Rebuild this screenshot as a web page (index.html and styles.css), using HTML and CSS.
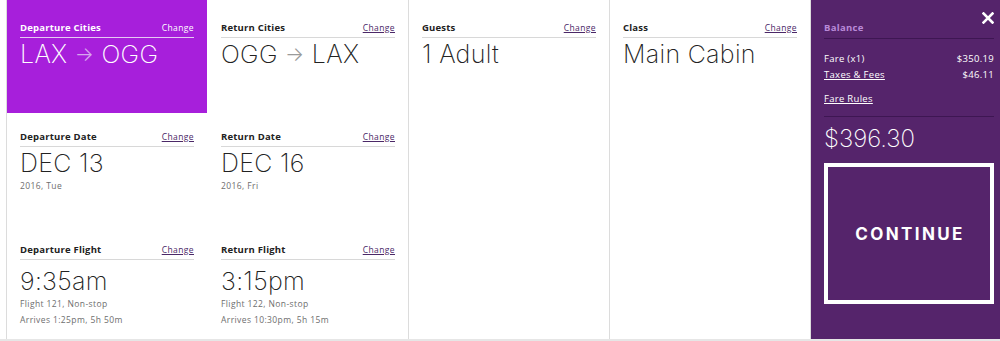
FILE: index.html
```html
<!DOCTYPE html>
<html lang="en">
<head>
    <meta charset="UTF-8">
    <meta name="viewport" content="width=device-width, initial-scale=1.0">
    <title>Trip Summary</title>
    <link rel="stylesheet" href="styles.css">
</head>
<body>
    <div class="page">
        <div class="columns">
            <div class="column">
                <section class="cell cell-active">
                    <div class="cell-head">
                        <span class="label">Departure Cities</span>
                        <a class="change" href="#">Change</a>
                    </div>
                    <div class="value">LAX <span class="arrow">&rarr;</span> OGG</div>
                </section>
                <section class="cell">
                    <div class="cell-head">
                        <span class="label">Departure Date</span>
                        <a class="change" href="#">Change</a>
                    </div>
                    <div class="value">DEC 13</div>
                    <div class="note">2016, Tue</div>
                </section>
                <section class="cell cell-flight">
                    <div class="cell-head">
                        <span class="label">Departure Flight</span>
                        <a class="change" href="#">Change</a>
                    </div>
                    <div class="value">9:35am</div>
                    <div class="note">Flight 121, Non-stop</div>
                    <div class="note">Arrives 1:25pm, 5h 50m</div>
                </section>
            </div>

            <div class="column">
                <section class="cell cell-first">
                    <div class="cell-head">
                        <span class="label">Return Cities</span>
                        <a class="change" href="#">Change</a>
                    </div>
                    <div class="value">OGG <span class="arrow">&rarr;</span> LAX</div>
                </section>
                <section class="cell">
                    <div class="cell-head">
                        <span class="label">Return Date</span>
                        <a class="change" href="#">Change</a>
                    </div>
                    <div class="value">DEC 16</div>
                    <div class="note">2016, Fri</div>
                </section>
                <section class="cell cell-flight">
                    <div class="cell-head">
                        <span class="label">Return Flight</span>
                        <a class="change" href="#">Change</a>
                    </div>
                    <div class="value">3:15pm</div>
                    <div class="note">Flight 122, Non-stop</div>
                    <div class="note">Arrives 10:30pm, 5h 15m</div>
                </section>
            </div>

            <div class="column">
                <section class="cell cell-first">
                    <div class="cell-head">
                        <span class="label">Guests</span>
                        <a class="change" href="#">Change</a>
                    </div>
                    <div class="value">1 Adult</div>
                </section>
            </div>

            <div class="column">
                <section class="cell cell-first">
                    <div class="cell-head">
                        <span class="label">Class</span>
                        <a class="change" href="#">Change</a>
                    </div>
                    <div class="value">Main Cabin</div>
                </section>
            </div>
        </div>

        <aside class="balance">
            <button class="close" aria-label="Close">
                <svg width="12" height="12" viewBox="0 0 12 12">
                    <path d="M1.5 1.5 L10.5 10.5 M10.5 1.5 L1.5 10.5" stroke="#fff" stroke-width="2.6" stroke-linecap="square"/>
                </svg>
            </button>
            <div class="balance-head">Balance</div>
            <div class="balance-row">
                <span>Fare (x1)</span>
                <span>$350.19</span>
            </div>
            <div class="balance-row">
                <a href="#">Taxes &amp; Fees</a>
                <span>$46.11</span>
            </div>
            <div class="balance-rules">
                <a href="#">Fare Rules</a>
            </div>
            <div class="total">$396.30</div>
            <button class="continue-btn">CONTINUE</button>
        </aside>
    </div>
</body>
</html>
```

FILE: styles.css
```css
* {
    margin: 0;
    padding: 0;
    box-sizing: border-box;
}

body {
    font-family: 'Open Sans', 'Liberation Sans', sans-serif;
    background: #e6e6e6;
    height: 341px;
    overflow: hidden;
}

.page {
    display: flex;
    height: 339px;
    background: #fff;
    padding-left: 6px;
}

.columns {
    display: flex;
    border-left: 1px solid #dcdcdc;
}

.column {
    width: 201px;
    border-right: 1px solid #dcdcdc;
}

.column:first-child {
    border-right-color: #fff;
}

.cell {
    height: 113px;
    padding: 18px 13px 0;
    color: #222;
}

.cell-first {
    padding-top: 22px;
}

.cell-active {
    background: #a71fdb;
    color: #fff;
    padding-top: 22px;
}

.cell-head {
    display: flex;
    justify-content: space-between;
    align-items: baseline;
    height: 16px;
    border-bottom: 1px solid #d8d8d8;
}

.cell-active .cell-head {
    border-bottom-color: #e6c9f3;
}

.label {
    font-size: 9.5px;
    font-weight: 700;
    line-height: 12px;
    letter-spacing: 0.2px;
}

.change {
    font-size: 8.5px;
    line-height: 12px;
    color: #4b2867;
    letter-spacing: 0.4px;
}

.cell-active .change {
    color: #fff;
    text-decoration: none;
}

.value {
    font-family: 'Inter', 'Open Sans', sans-serif;
    font-size: 25px;
    font-weight: 200;
    line-height: 30px;
    letter-spacing: 0.3px;
    padding-top: 1px;
}

.arrow {
    color: #9a9a9a;
    font-size: 20px;
    font-weight: 300;
    position: relative;
    top: -2px;
}

.cell-active .arrow {
    color: #d7a6ee;
}

.cell-flight .value {
    margin-top: 5px;
}

.note {
    font-size: 8.5px;
    line-height: 16px;
    color: #6e6e6e;
    letter-spacing: 0.4px;
}

.cell-flight .note:first-of-type {
    margin-top: -2px;
}

.balance {
    position: relative;
    flex: 1;
    background: #55246b;
    color: #fff;
    padding: 22px 6px 0 13px;
    font-size: 9.5px;
}

.close {
    position: absolute;
    top: 12px;
    right: 6px;
    background: none;
    border: none;
    cursor: pointer;
}

.balance-head {
    color: #b98ad8;
    font-weight: 700;
    line-height: 12px;
    padding-bottom: 4px;
    border-bottom: 1px solid #3e1653;
    margin-bottom: 12px;
    letter-spacing: 0.3px;
}

.balance-row {
    display: flex;
    justify-content: space-between;
    line-height: 16px;
    letter-spacing: 0.3px;
}

.balance a {
    color: #fff;
}

.balance-rules {
    line-height: 16px;
    margin-top: 8px;
    padding-bottom: 9px;
    border-bottom: 1px solid #3e1653;
    letter-spacing: 0.3px;
}

.total {
    font-family: 'Inter', 'Open Sans', sans-serif;
    font-size: 24px;
    font-weight: 200;
    line-height: 30px;
    margin-top: 7px;
}

.continue-btn {
    display: block;
    width: 170px;
    height: 141px;
    margin-top: 9px;
    background: none;
    border: 4px solid #fff;
    color: #fff;
    font-family: 'Inter', 'Open Sans', sans-serif;
    font-size: 17px;
    font-weight: 700;
    letter-spacing: 2.4px;
    padding-left: 2px;
    cursor: pointer;
}
```
